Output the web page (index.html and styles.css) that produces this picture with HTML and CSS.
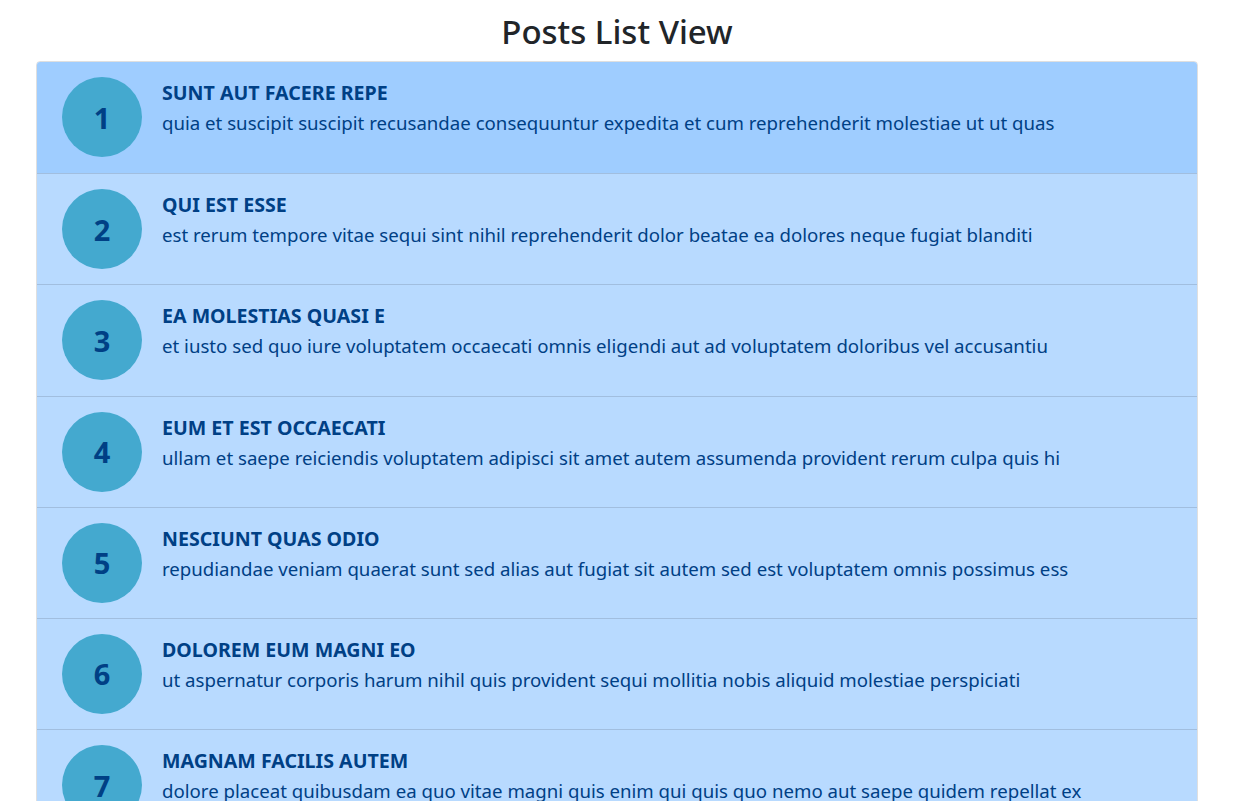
FILE: index.html
```html
<!DOCTYPE html>
<html lang="en">
<head>
<meta charset="utf-8">
<title>Posts List View</title>
<link rel="stylesheet" href="styles.css">
</head>
<body>
<div class="page">
  <h1 class="page-title">Posts List View</h1>
  <ul class="posts">
    <li class="post active">
      <div class="badge">1</div>
      <div class="post-body">
        <h2 class="post-title">sunt aut facere repe</h2>
        <p class="post-text">quia et suscipit suscipit recusandae consequuntur expedita et cum reprehenderit molestiae ut ut quas</p>
      </div>
    </li>
    <li class="post">
      <div class="badge">2</div>
      <div class="post-body">
        <h2 class="post-title">qui est esse</h2>
        <p class="post-text">est rerum tempore vitae sequi sint nihil reprehenderit dolor beatae ea dolores neque fugiat blanditi</p>
      </div>
    </li>
    <li class="post">
      <div class="badge">3</div>
      <div class="post-body">
        <h2 class="post-title">ea molestias quasi e</h2>
        <p class="post-text">et iusto sed quo iure voluptatem occaecati omnis eligendi aut ad voluptatem doloribus vel accusantiu</p>
      </div>
    </li>
    <li class="post">
      <div class="badge">4</div>
      <div class="post-body">
        <h2 class="post-title">eum et est occaecati</h2>
        <p class="post-text">ullam et saepe reiciendis voluptatem adipisci sit amet autem assumenda provident rerum culpa quis hi</p>
      </div>
    </li>
    <li class="post">
      <div class="badge">5</div>
      <div class="post-body">
        <h2 class="post-title">nesciunt quas odio</h2>
        <p class="post-text">repudiandae veniam quaerat sunt sed alias aut fugiat sit autem sed est voluptatem omnis possimus ess</p>
      </div>
    </li>
    <li class="post">
      <div class="badge">6</div>
      <div class="post-body">
        <h2 class="post-title">dolorem eum magni eo</h2>
        <p class="post-text">ut aspernatur corporis harum nihil quis provident sequi mollitia nobis aliquid molestiae perspiciati</p>
      </div>
    </li>
    <li class="post">
      <div class="badge">7</div>
      <div class="post-body">
        <h2 class="post-title">magnam facilis autem</h2>
        <p class="post-text">dolore placeat quibusdam ea quo vitae magni quis enim qui quis quo nemo aut saepe quidem repellat ex</p>
      </div>
    </li>
  </ul>
</div>
</body>
</html>
```

FILE: styles.css
```css
* { box-sizing: border-box; }
html, body { margin: 0; padding: 0; background: #fff; }
body {
  font-family: "Noto Sans", "Open Sans", sans-serif;
  color: #212529;
  overflow: hidden;
}
.page {
  width: 1162px;
  margin-left: 36px;
}
.page-title {
  margin: 0;
  height: 61px;
  padding-top: 10px;
  text-align: center;
  font-size: 33px;
  font-weight: 500;
  line-height: 44px;
  color: #212529;
}
.posts {
  list-style: none;
  margin: 0;
  padding: 0;
  border: 1px solid rgba(0, 0, 0, 0.125);
  border-radius: 4px;
  overflow: hidden;
}
.post {
  display: flex;
  align-items: flex-start;
  gap: 20px;
  height: 111.2px;
  padding: 15px 25px;
  background: #b8daff;
  color: #004085;
  border-top: 1px solid rgba(0, 0, 0, 0.125);
}
.post:first-child { border-top: 0; }
.post.active { background: #9fcdff; }
.badge {
  flex: none;
  width: 80px;
  height: 80px;
  border-radius: 50%;
  background: #44a9cf;
  color: #004085;
  display: flex;
  align-items: center;
  justify-content: center;
  font-size: 29px;
  font-weight: 700;
}
.post-body { padding-top: 4px; }
.post-title {
  margin: 0 0 5px;
  font-size: 19.6px;
  line-height: 24px;
  font-weight: 700;
  text-transform: uppercase;
}
.post-text {
  margin: 0;
  font-size: 18.65px;
  line-height: 26px;
}
```
